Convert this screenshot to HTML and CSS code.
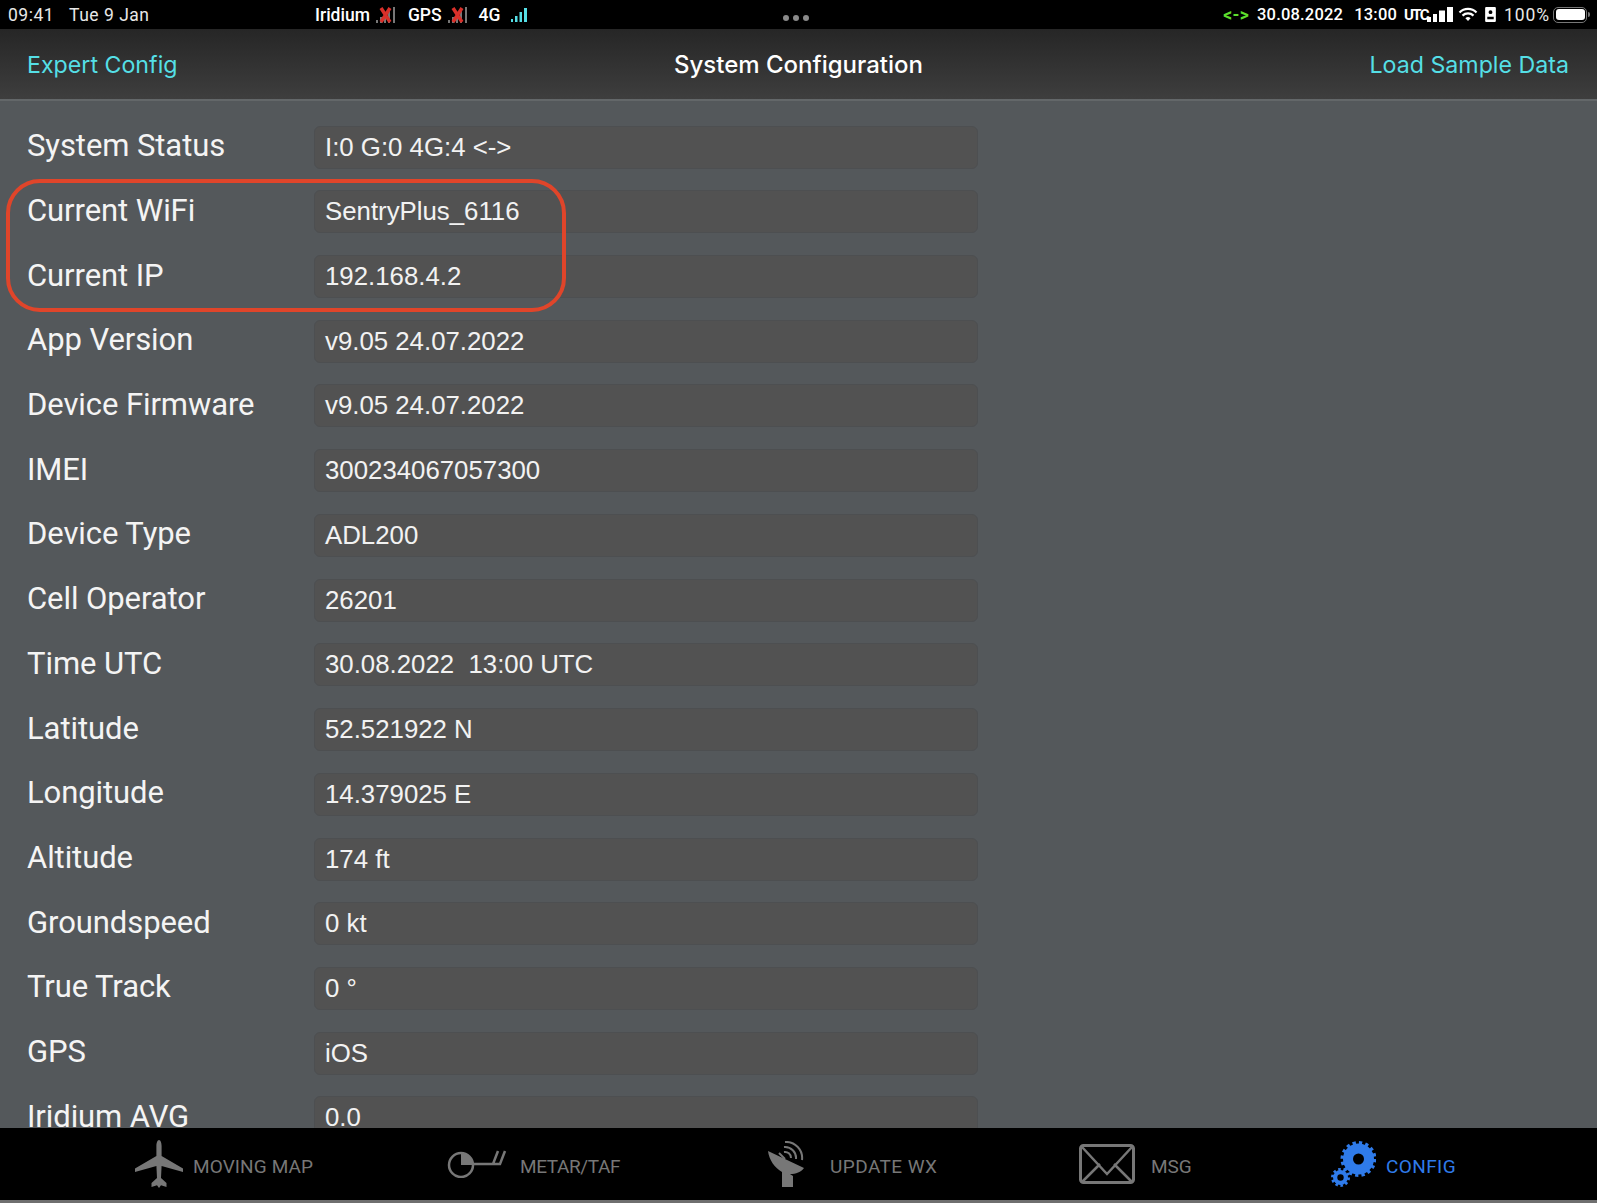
FILE: index.html
```html
<!DOCTYPE html>
<html lang="en">
<head>
<meta charset="utf-8">
<title>System Configuration</title>
<link rel="stylesheet" href="styles.css">
</head>
<body>
<div class="screen">
  <header class="status">
    <div class="st-left"><span>09:41</span><span>Tue 9 Jan</span></div>
    <div class="st-mid">
      <span>Iridium</span>
      <svg class="sig" viewBox="0 0 21 16"><path fill="#777" d="M1 13h2v3H1zM5 10h2v6H5zM9 7h2v9H9zM13 4h2v12h-2zM18 0h2v16h-2z"/><path stroke="#d9302a" stroke-width="3.500" d="M6 1l9 14M15 1L6 15"/></svg>
      <span class="gap-s">GPS</span>
      <svg class="sig" viewBox="0 0 21 16"><path fill="#777" d="M1 13h2v3H1zM5 10h2v6H5zM9 7h2v9H9zM13 4h2v12h-2zM18 0h2v16h-2z"/><path stroke="#d9302a" stroke-width="3.500" d="M6 1l9 14M15 1L6 15"/></svg>
      <span class="gap-t">4G</span>
      <svg class="sig4" viewBox="0 0 16 14"><path fill="#55dfe6" d="M0 11h2v3H0zM4 8h2.500v6H4zM8.500 4H11v10H8.500zM13 0h3v14h-3z"/></svg>
    </div>
    <div class="st-dots"><i></i><i></i><i></i></div>
    <div class="st-right">
      <span class="arrows">&lt;-&gt;</span>
      <span class="st-date">30.08.2022</span>
      <span class="st-time">13:00</span>
      <span class="st-overlap">UTC</span>
      <svg class="cell" viewBox="0 0 26 15"><path fill="#fff" d="M0 10h4v5H0zM6 7h4v8H6zM12 3.500h6V15h-6zM20 0h6v15h-6z"/></svg>
      <svg class="wifi" viewBox="0 0 20 15"><path fill="none" stroke="#fff" stroke-width="2.200" d="M1.500 5.500a12 12 0 0 1 17 0M4.500 8.600a8 8 0 0 1 11 0"/><path fill="#fff" d="M7.400 11.200a4 4 0 0 1 5.200 0L10 14z"/></svg>
      <svg class="lock" viewBox="0 0 10 14"><path fill="#fff" fill-rule="evenodd" d="M1 0h8a1 1 0 0 1 1 1v12a1 1 0 0 1-1 1H1a1 1 0 0 1-1-1V1a1 1 0 0 1 1-1zM5 3a1.800 1.800 0 1 0 0 3.600A1.800 1.800 0 0 0 5 3zM2 9v2.500h6V9z"/></svg>
      <span class="pct">100%</span>
      <span class="battery"><b></b></span>
    </div>
  </header>

  <nav class="navbar">
    <span class="link">Expert Config</span>
    <span class="title">System Configuration</span>
    <span class="link">Load Sample Data</span>
  </nav>

  <main class="content">
    <div class="form">
      <div class="row"><span class="label">System Status</span><span class="field">I:0 G:0 4G:4 &lt;-&gt;</span></div>
      <div class="row"><span class="label">Current WiFi</span><span class="field">SentryPlus_6116</span></div>
      <div class="row"><span class="label">Current IP</span><span class="field">192.168.4.2</span></div>
      <div class="row"><span class="label">App Version</span><span class="field">v9.05 24.07.2022</span></div>
      <div class="row"><span class="label">Device Firmware</span><span class="field">v9.05 24.07.2022</span></div>
      <div class="row"><span class="label">IMEI</span><span class="field">300234067057300</span></div>
      <div class="row"><span class="label">Device Type</span><span class="field">ADL200</span></div>
      <div class="row"><span class="label">Cell Operator</span><span class="field">26201</span></div>
      <div class="row"><span class="label">Time UTC</span><span class="field pre">30.08.2022  13:00 UTC</span></div>
      <div class="row"><span class="label">Latitude</span><span class="field">52.521922 N</span></div>
      <div class="row"><span class="label">Longitude</span><span class="field">14.379025 E</span></div>
      <div class="row"><span class="label">Altitude</span><span class="field">174 ft</span></div>
      <div class="row"><span class="label">Groundspeed</span><span class="field">0 kt</span></div>
      <div class="row"><span class="label">True Track</span><span class="field">0 °</span></div>
      <div class="row"><span class="label">GPS</span><span class="field">iOS</span></div>
      <div class="row"><span class="label">Iridium AVG</span><span class="field">0.0</span></div>
    </div>
    <div class="callout"></div>
  </main>

  <footer class="tabbar">
    <div class="tab t1">
      <svg class="ic-plane" viewBox="0 0 48 48"><path fill="#777" d="M24 0c1.600 0 2.600 3 2.600 6v10L48 28.500V32l-21.400-6-.6 12 5.500 5V47l-5.500-1.800-2 2.800-2-2.800L16.500 47v-4l5.500-5-.6-12L0 32v-3.500L21.400 16V6c0-3 1-6 2.600-6z"/></svg>
      <span>MOVING MAP</span>
    </div>
    <div class="tab t2">
      <svg class="ic-metar" viewBox="0 0 61 28"><circle cx="14" cy="15" r="12" fill="none" stroke="#777" stroke-width="2.500"/><path fill="#777" d="M14 3a12 12 0 0 1 12 12H14z"/><path fill="none" stroke="#777" stroke-width="2.500" d="M26 14h27l5-13M46 14l5-13"/></svg>
      <span>METAR/TAF</span>
    </div>
    <div class="tab t3">
      <svg class="ic-dish" viewBox="0 0 38 46"><path fill="#777" d="M1 10c1 9 7 17 14 21v15h11V35l-3-2c6 0 11-2 14-6z"/><path fill="none" stroke="#777" stroke-width="2" d="M17 11a6 6 0 0 1 7 6M17 6a11 11 0 0 1 12 12M18 1a16 16 0 0 1 17 18"/><path stroke="#777" stroke-width="2" d="M12 12l6 6"/></svg>
      <span>UPDATE WX</span>
    </div>
    <div class="tab t4">
      <svg class="ic-mail" viewBox="0 0 56 40"><rect x="1.500" y="1.500" width="53" height="37" rx="3" fill="none" stroke="#777" stroke-width="3"/><path fill="none" stroke="#777" stroke-width="2.500" d="M3 3l25 27L53 3M3 38l18-18M53 38L35 20"/></svg>
      <span>MSG</span>
    </div>
    <div class="tab t5 active">
      <svg class="ic-gear" viewBox="0 0 45 46">
        <g fill="#2f7bea">
          <circle cx="27.500" cy="18" r="15.500"/>
          <circle cx="27.500" cy="18" r="16" fill="none" stroke="#2f7bea" stroke-width="4" stroke-dasharray="3.200 3.080"/>
          <circle cx="9.500" cy="36.500" r="7.500"/>
          <circle cx="9.500" cy="36.500" r="8" fill="none" stroke="#2f7bea" stroke-width="3" stroke-dasharray="2.500 2.530"/>
        </g>
        <circle cx="27.500" cy="18" r="5.500" fill="#000"/>
        <circle cx="9.500" cy="36.500" r="3.200" fill="#000"/>
      </svg>
      <span>CONFIG</span>
    </div>
  </footer>
  <div class="strip"></div>
</div>
</body>
</html>
```
FILE: styles.css
```css
* { box-sizing: border-box; }
html, body { margin: 0; padding: 0; height: 100%; }
body { background: #54585b; font-family: "Inter", "Liberation Sans", sans-serif; color: #fff; overflow: hidden; }
.screen { width: 1597px; height: 1203px; display: flex; flex-direction: column; }

.status { height: 29px; flex: none; background: #000; position: relative; display: flex; align-items: center; padding: 0 8px; font-size: 17.500px; font-family: "Roboto", sans-serif; }
.st-left { display: flex; gap: 15px; width: 307px; color: #e8e8e8; letter-spacing: .5px; }
.st-mid { display: flex; align-items: center; font-weight: 500; }
.sig { width: 21px; height: 16px; margin-left: 5px; }
.gap-s { margin-left: 12px; }
.gap-t { margin-left: 11px; }
.sig4 { width: 16px; height: 14px; margin-left: 11px; }
.st-dots { position: absolute; left: 783px; top: 15px; display: flex; gap: 4px; }
.st-dots i { width: 6px; height: 6px; border-radius: 50%; background: #8a8a8a; }
.st-right { margin-left: auto; display: flex; align-items: center; padding-right: 2px; }
.arrows { color: #5ddc2c; font-weight: 700; margin-right: 8px; letter-spacing: .3px; }
.st-date { font-weight: 500; font-size: 16.500px; margin-right: 11px; letter-spacing: .2px; }
.st-time { font-weight: 500; font-size: 16.500px; margin-right: 7px; letter-spacing: .2px; }
.st-overlap { font-weight: 700; font-size: 15px; letter-spacing: -1.600px; }
.cell { width: 26px; height: 15px; margin-left: -1px; }
.wifi { width: 20px; height: 15px; margin-left: 5px; }
.lock { width: 11px; height: 15px; margin-left: 7px; }
.pct { letter-spacing: .9px; color: #e8e8e8; margin-left: 8px; }
.battery { width: 34px; height: 16px; border: 1.500px solid #777; border-radius: 5px; padding: 1.500px; display: flex; margin-left: 3px; position: relative; }
.battery b { flex: 1; background: #fff; border-radius: 3px; }
.battery::after { content: ""; position: absolute; right: -4px; top: 4px; width: 2px; height: 5px; background: #777; border-radius: 0 2px 2px 0; }

.navbar { height: 72px; flex: none; display: flex; justify-content: space-between; align-items: center; padding: 2px 28px 0 27px; background: linear-gradient(#262626, #3e3e3e); border-bottom: 2px solid #636769; font-size: 24px; position: relative; }
.link { color: #55dfe6; font-size: 23.200px; }
.title { position: absolute; left: 0; right: 0; top: 21px; text-align: center; font-weight: 500; pointer-events: none; }

.content { flex: 1; min-height: 0; position: relative; overflow: hidden; background: #54585b; }
.form { display: flex; flex-direction: column; gap: 21.720px; padding: 24.600px 0 0 27px; }
.row { display: flex; align-items: center; height: 43px; flex: none; }
.label { width: 287px; padding-bottom: 3px; font-family: "Roboto", sans-serif; font-size: 31px; letter-spacing: -.08px; color: #f4f4f4; }
.field { width: 664px; height: 43px; background: #525252; border: 1px solid #4d4f51; border-radius: 6px; padding: 1px 0 0 10px; line-height: 39px; font-family: "Liberation Sans", sans-serif; font-size: 25.800px; color: #f2f2f2; }
.pre { white-space: pre; }
.callout { position: absolute; left: 6px; top: 78px; width: 560px; height: 133px; border: 4px solid #e0452a; border-radius: 34px; }

.tabbar { height: 72px; flex: none; background: #000; position: relative; font-family: "Roboto", sans-serif; font-size: 19px; color: #777; }
.tab { position: absolute; top: 0; bottom: 0; display: flex; align-items: center; }
.tab span { padding-top: 4px; }
.t1 { left: 135px; gap: 10px; letter-spacing: .1px; }
.t2 { left: 447px; gap: 12px; letter-spacing: -.4px; }
.t3 { left: 767px; gap: 25px; letter-spacing: .45px; }
.t4 { left: 1079px; gap: 16px; }
.t5 { left: 1331px; gap: 10px; letter-spacing: .4px; }
.active { color: #2f7bea; }
.ic-plane { width: 48px; height: 48px; }
.ic-metar { width: 61px; height: 28px; }
.ic-dish { width: 38px; height: 46px; }
.ic-mail { width: 56px; height: 40px; }
.ic-gear { width: 45px; height: 46px; }
.strip { height: 3px; flex: none; background: #6f6f6f; }
```
